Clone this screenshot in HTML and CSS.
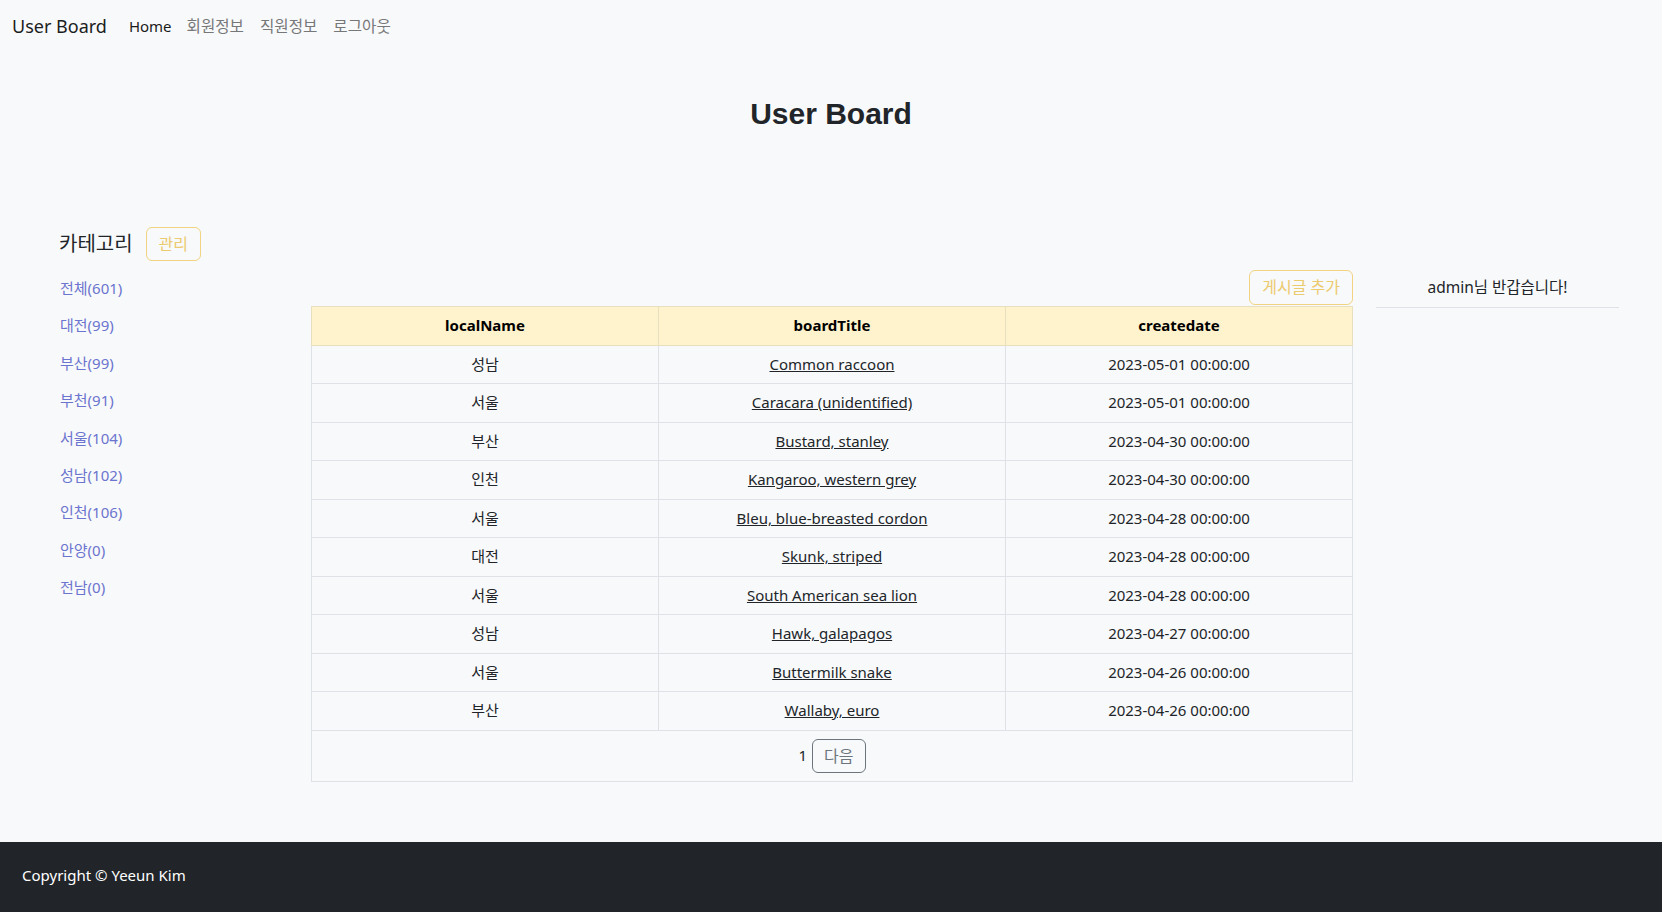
FILE: index.html
```html
<!DOCTYPE html>
<html lang="ko">
<head>
<meta charset="utf-8">
<title>User Board</title>
<link rel="stylesheet" href="styles.css">
</head>
<body>
<nav class="navbar">
  <a class="brand" href="#">User Board</a>
  <ul class="nav-links">
    <li><a class="nav-link active" href="#">Home</a></li>
    <li><a class="nav-link nav-ko" href="#">회원정보</a></li>
    <li><a class="nav-link nav-ko" href="#">직원정보</a></li>
    <li><a class="nav-link nav-ko" href="#">로그아웃</a></li>
  </ul>
</nav>
<main class="page">
  <h1 class="page-title">User Board</h1>
  <div class="layout">
    <aside class="sidebar">
      <div class="cat-head">
        <h2 class="cat-title">카테고리</h2>
        <button class="btn btn-warn" type="button">관리</button>
      </div>
      <ul class="cat-list">
        <li><a href="#">전체(601)</a></li>
        <li><a href="#">대전(99)</a></li>
        <li><a href="#">부산(99)</a></li>
        <li><a href="#">부천(91)</a></li>
        <li><a href="#">서울(104)</a></li>
        <li><a href="#">성남(102)</a></li>
        <li><a href="#">인천(106)</a></li>
        <li><a href="#">안양(0)</a></li>
        <li><a href="#">전남(0)</a></li>
      </ul>
    </aside>
    <section class="board">
      <div class="board-actions">
        <button class="btn btn-warn btn-add" type="button">게시글 추가</button>
      </div>
      <table class="board-table">
        <thead>
          <tr><th>localName</th><th>boardTitle</th><th>createdate</th></tr>
        </thead>
        <tbody>
          <tr><td>성남</td><td><a href="#">Common raccoon</a></td><td>2023-05-01 00:00:00</td></tr>
          <tr><td>서울</td><td><a href="#">Caracara (unidentified)</a></td><td>2023-05-01 00:00:00</td></tr>
          <tr><td>부산</td><td><a href="#">Bustard, stanley</a></td><td>2023-04-30 00:00:00</td></tr>
          <tr><td>인천</td><td><a href="#">Kangaroo, western grey</a></td><td>2023-04-30 00:00:00</td></tr>
          <tr><td>서울</td><td><a href="#">Bleu, blue-breasted cordon</a></td><td>2023-04-28 00:00:00</td></tr>
          <tr><td>대전</td><td><a href="#">Skunk, striped</a></td><td>2023-04-28 00:00:00</td></tr>
          <tr><td>서울</td><td><a href="#">South American sea lion</a></td><td>2023-04-28 00:00:00</td></tr>
          <tr><td>성남</td><td><a href="#">Hawk, galapagos</a></td><td>2023-04-27 00:00:00</td></tr>
          <tr><td>서울</td><td><a href="#">Buttermilk snake</a></td><td>2023-04-26 00:00:00</td></tr>
          <tr><td>부산</td><td><a href="#">Wallaby, euro</a></td><td>2023-04-26 00:00:00</td></tr>
        </tbody>
        <tfoot>
          <tr>
            <td colspan="3" class="pager-cell">
              <div class="pager"><span class="page-num">1</span><button class="btn btn-gray" type="button">다음</button></div>
            </td>
          </tr>
        </tfoot>
      </table>
    </section>
    <aside class="welcome">
      <p class="welcome-text">admin님 반갑습니다!</p>
    </aside>
  </div>
</main>
<footer class="footer">Copyright © Yeeun Kim</footer>
</body>
</html>
```

FILE: styles.css
```css
* { box-sizing: border-box; }

html, body { height: 100%; }

body {
  margin: 0;
  min-height: 100vh;
  display: flex;
  flex-direction: column;
  background: #f8f9fa;
  color: #212529;
  font-family: "Noto Sans", "Noto Sans CJK KR", sans-serif;
  font-size: 15px;
  line-height: 24px;
}

a { color: inherit; }

/* navbar */
.navbar {
  height: 52px;
  display: flex;
  align-items: center;
  padding: 0 12px;
}
.brand {
  font-size: 18px;
  color: #1b1e21;
  text-decoration: none;
  margin-right: 14px;
}
.nav-links {
  list-style: none;
  margin: 0;
  padding: 0;
  display: flex;
}
.nav-link {
  display: block;
  padding: 0 8px;
  color: #767778;
  text-decoration: none;
}
.nav-link.active { color: #1a1a1a; padding-right: 7px; }
.nav-ko { font-size: 15.6px; }

/* page */
.page { flex: 1; }

.page-title {
  margin: 44px 0 0;
  text-align: center;
  font-family: "Liberation Sans", Arial, sans-serif;
  font-weight: 700;
  font-size: 30px;
  line-height: 36px;
  color: #212529;
}

.layout {
  margin-top: 95px;
  padding-left: 59px;
  display: grid;
  grid-template-columns: 252px 1042px 266px;
  align-items: start;
}

/* buttons */
.btn {
  font-family: inherit;
  font-size: 16px;
  line-height: 24px;
  background: transparent;
  border: 1px solid;
  border-radius: 6px;
  cursor: pointer;
}
.btn-warn {
  color: #ecca6e;
  border-color: #f1d382;
  padding: 4px 12px;
}
.btn-gray {
  color: #6c757d;
  border-color: #6c757d;
  padding: 4px 11px;
}

/* sidebar */
.cat-head {
  display: flex;
  align-items: center;
  gap: 13px;
}
.cat-title {
  margin: 0;
  font-size: 20px;
  font-weight: 400;
  line-height: 28px;
  color: #212529;
}
.cat-list {
  list-style: none;
  margin: 15px 0 0 1px;
  padding: 0;
  display: flex;
  flex-direction: column;
  gap: 13.4px;
}
.cat-list a {
  color: #6b74cf;
  text-decoration: none;
}

/* board */
.board { padding-top: 43px; }
.board-actions {
  display: flex;
  justify-content: flex-end;
  margin-bottom: 1px;
}
.btn-add {
  padding: 5px 12px;
  line-height: 23px;
}

.board-table {
  width: 100%;
  border-collapse: collapse;
  table-layout: fixed;
  text-align: center;
}
.board-table th,
.board-table td {
  border: 1px solid #dee2e6;
  padding: 7px 8px;
  line-height: 23.5px;
}
.board-table th {
  background: #fff3cd;
  border-color: #e8dfbe;
  font-weight: 700;
  color: #000;
}
.board-table td a { color: #212529; }

.board-table .pager-cell { padding: 8px; }
.pager {
  display: flex;
  justify-content: center;
  align-items: center;
  gap: 5px;
}
.page-num { color: #212529; }

/* right panel */
.welcome {
  margin-left: 23px;
  padding-top: 43px;
}
.welcome-text {
  margin: 0;
  padding: 5px 0 8px;
  text-align: center;
  font-size: 15.5px;
  border-bottom: 1px solid #dee2e6;
}

/* footer */
.footer {
  height: 70px;
  display: flex;
  align-items: center;
  padding: 0 22px 4px;
  background: #212529;
  color: #fff;
}
```
